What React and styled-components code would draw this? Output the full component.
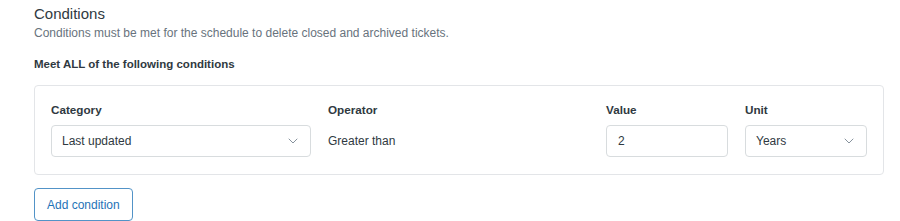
import React from "react";
import styled, { createGlobalStyle } from "styled-components";

const Global = createGlobalStyle`
  html, body { margin: 0; padding: 0; background: #fff; }
  body { font-family: "Liberation Sans", Arial, sans-serif; color: #2f3941; }
  * { box-sizing: border-box; }
`;

const Page = styled.div`
  padding: 4px 16px 0 34px;
  width: 900px;
`;

const Title = styled.h2`
  margin: 0;
  font-size: 15px;
  font-weight: 400;
  line-height: 20px;
  color: #2f3941;
`;

const Subtitle = styled.p`
  margin: 1px 0 0;
  font-size: 12px;
  line-height: 16px;
  color: #68737d;
`;

const GroupLabel = styled.div`
  margin-top: 15px;
  font-size: 11.5px;
  font-weight: 700;
  line-height: 16px;
  color: #2f3941;
`;

const Panel = styled.div`
  margin-top: 13px;
  width: 850px;
  border: 1px solid #e3e5e8;
  border-radius: 4px;
  padding: 16px 16px 17px;
  display: grid;
  grid-template-columns: 260px 261px 122px 122px;
  column-gap: 17px;
`;

const Field = styled.div`
  display: flex;
  flex-direction: column;
  gap: 7px;
`;

const Label = styled.div`
  font-size: 11.7px;
  font-weight: 700;
  line-height: 16px;
  color: #2f3941;
`;

const Box = styled.div`
  height: 32px;
  border: 1px solid #d8dcde;
  border-radius: 4px;
  display: flex;
  align-items: center;
  justify-content: space-between;
  padding: 0 12px 0 ${(p) => (p.$pad ? p.$pad : 10)}px;
  font-size: 12px;
  color: #2f3941;
  background: #fff;
`;

const Static = styled.div`
  height: 32px;
  display: flex;
  align-items: center;
  font-size: 12px;
  color: #2f3941;
`;

const Chevron = () => (
  <svg width="10" height="6" viewBox="0 0 10 6" fill="none">
    <path d="M1 1l4 4 4-4" stroke="#87929d" strokeWidth="1" strokeLinecap="round" strokeLinejoin="round" />
  </svg>
);

const Button = styled.button`
  margin-top: 13px;
  height: 33px;
  padding: 0 12px;
  border: 1px solid #5293c7;
  border-radius: 4px;
  background: #fff;
  color: #1f73b7;
  font-family: "Liberation Sans", Arial, sans-serif;
  font-size: 12px;
  line-height: 16px;
`;

export default function App() {
  return (
    <>
      <Global />
      <Page>
        <Title>Conditions</Title>
        <Subtitle>Conditions must be met for the schedule to delete closed and archived tickets.</Subtitle>
        <GroupLabel>Meet ALL of the following conditions</GroupLabel>
        <Panel>
          <Field>
            <Label>Category</Label>
            <Box>
              <span>Last updated</span>
              <Chevron />
            </Box>
          </Field>
          <Field>
            <Label>Operator</Label>
            <Static>Greater than</Static>
          </Field>
          <Field>
            <Label>Value</Label>
            <Box $pad={11}>
              <span>2</span>
            </Box>
          </Field>
          <Field>
            <Label>Unit</Label>
            <Box>
              <span>Years</span>
              <Chevron />
            </Box>
          </Field>
        </Panel>
        <Button>Add condition</Button>
      </Page>
    </>
  );
}
